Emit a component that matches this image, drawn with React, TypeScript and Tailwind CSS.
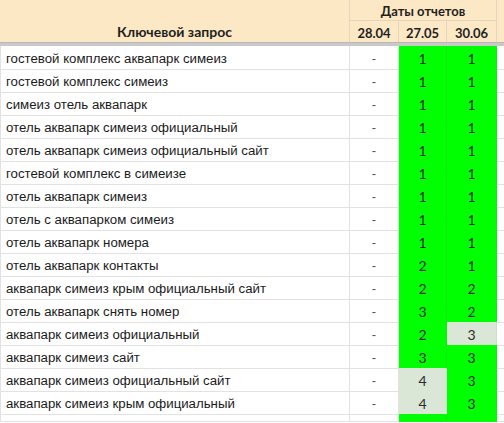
import React from 'react';

type Mark = 'g' | 'l';

interface Row {
  query: string;
  first: string;
  second: [string, Mark];
  third: [string, Mark];
}

const rows: Row[] = [
  { query: 'гостевой комплекс аквапарк симеиз', first: '-', second: ['1', 'g'], third: ['1', 'g'] },
  { query: 'гостевой комплекс симеиз', first: '-', second: ['1', 'g'], third: ['1', 'g'] },
  { query: 'симеиз отель аквапарк', first: '-', second: ['1', 'g'], third: ['1', 'g'] },
  { query: 'отель аквапарк симеиз официальный', first: '-', second: ['1', 'g'], third: ['1', 'g'] },
  { query: 'отель аквапарк симеиз официальный сайт', first: '-', second: ['1', 'g'], third: ['1', 'g'] },
  { query: 'гостевой комплекс в симеизе', first: '-', second: ['1', 'g'], third: ['1', 'g'] },
  { query: 'отель аквапарк симеиз', first: '-', second: ['1', 'g'], third: ['1', 'g'] },
  { query: 'отель с аквапарком симеиз', first: '-', second: ['1', 'g'], third: ['1', 'g'] },
  { query: 'отель аквапарк номера', first: '-', second: ['1', 'g'], third: ['1', 'g'] },
  { query: 'отель аквапарк контакты', first: '-', second: ['2', 'g'], third: ['1', 'g'] },
  { query: 'аквапарк симеиз крым официальный сайт', first: '-', second: ['2', 'g'], third: ['2', 'g'] },
  { query: 'отель аквапарк снять номер', first: '-', second: ['3', 'g'], third: ['2', 'g'] },
  { query: 'аквапарк симеиз официальный', first: '-', second: ['2', 'g'], third: ['3', 'l'] },
  { query: 'аквапарк симеиз сайт', first: '-', second: ['3', 'g'], third: ['3', 'g'] },
  { query: 'аквапарк симеиз официальный сайт', first: '-', second: ['4', 'l'], third: ['3', 'g'] },
  { query: 'аквапарк симеиз крым официальный', first: '-', second: ['4', 'l'], third: ['3', 'g'] },
];

const cols = 'grid grid-cols-[350px_49px_48px_50px_1fr]';

const ScoreCell = ({ value, mark }: { value: string; mark: Mark }) => (
  <div
    className={`flex items-center justify-center pt-[2px] border-r border-b font-['Lato',sans-serif] text-[14px] text-[#2b2b2b] ${
      mark === 'g' ? 'bg-[#00ff00] border-[#10ea10]' : 'bg-[#dae6d6] border-[#d2dccf]'
    }`}
  >
    {value}
  </div>
);

export default function App() {
  return (
    <div className="w-[504px] h-[423px] overflow-hidden bg-white font-['Liberation_Sans',Arial,sans-serif]">
      {/* header */}
      <div className={`${cols} grid-rows-[21px_21px] bg-[#fce8c4] font-['Lato',sans-serif] font-bold text-[#1f1f1f]`}>
        <div className="row-span-2 flex items-end justify-center pb-0 border-r border-[#e3d6bd] text-[14px]">
          Ключевой запрос
        </div>
        <div className="col-span-3 flex items-center justify-center pt-[3px] border-r border-b border-[#e3d6bd] text-[13px]">
          Даты отчетов
        </div>
        <div className="row-span-2" />
        <div className="flex items-center justify-center pt-[4px] border-r border-[#e3d6bd] text-[13px]">28.04</div>
        <div className="flex items-center justify-center pt-[4px] border-r border-[#e3d6bd] text-[13px]">27.05</div>
        <div className="flex items-center justify-center pt-[4px] border-r border-[#e3d6bd] text-[13px]">30.06</div>
      </div>
      <div className="h-[4px] bg-[#c9c9c9] border-t border-[#b8b8b8]" />

      {/* data rows */}
      {rows.map((row) => (
        <div key={row.query} className={`${cols} h-[23px]`}>
          <div className="flex items-center pt-[2px] pl-[5px] border-l border-r border-b border-[#e2e2e2] text-[13.25px] text-[#1a1a1a] whitespace-nowrap">
            {row.query}
          </div>
          <div className="flex items-center justify-center pt-[2px] border-r border-b border-[#e2e2e2] text-[13px] text-[#555]">
            {row.first}
          </div>
          <ScoreCell value={row.second[0]} mark={row.second[1]} />
          <ScoreCell value={row.third[0]} mark={row.third[1]} />
          <div className="border-b border-[#e2e2e2]" />
        </div>
      ))}

      {/* partially visible row */}
      <div className={`${cols} h-[8px]`}>
        <div className="border-l border-r border-b border-[#e2e2e2]" />
        <div className="border-r border-b border-[#e2e2e2]" />
        <div className="bg-[#00ff00] border-r border-[#10ea10]" />
        <div className="bg-[#00ff00]" />
        <div className="border-b border-[#e2e2e2]" />
      </div>
    </div>
  );
}
